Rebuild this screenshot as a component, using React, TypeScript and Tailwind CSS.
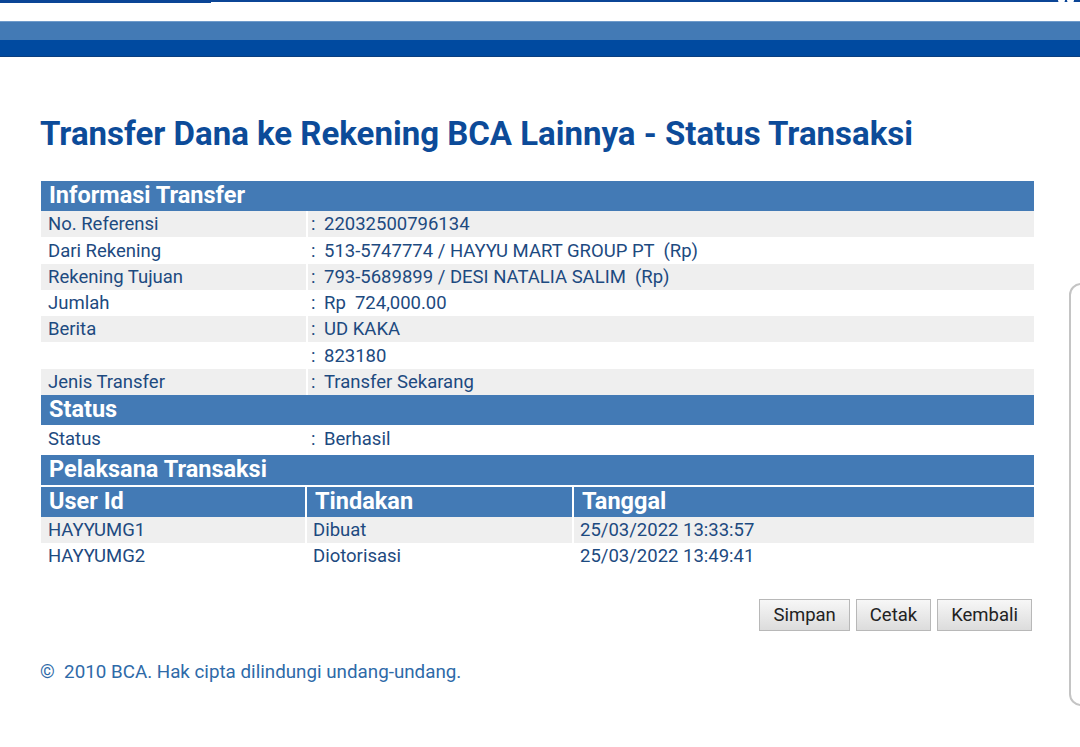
const info: [string, string][] = [
  ['No. Referensi', '22032500796134'],
  ['Dari Rekening', '513-5747774 / HAYYU MART GROUP PT  (Rp)'],
  ['Rekening Tujuan', '793-5689899 / DESI NATALIA SALIM  (Rp)'],
  ['Jumlah', 'Rp  724,000.00'],
  ['Berita', 'UD KAKA'],
  ['', '823180'],
  ['Jenis Transfer', 'Transfer Sekarang'],
];

const users: [string, string, string][] = [
  ['HAYYUMG1', 'Dibuat', '25/03/2022 13:33:57'],
  ['HAYYUMG2', 'Diotorisasi', '25/03/2022 13:49:41'],
];

function SectionHeader({ title }: { title: string }) {
  return (
    <div className="h-[30px] bg-[#437ab5] px-[8px] flex items-center text-white font-bold text-[23.5px] leading-none">
      {title}
    </div>
  );
}

function InfoRow({ label, value, grey }: { label: string; value: string; grey: boolean }) {
  const bg = grey ? 'bg-[#efefef]' : 'bg-white';
  return (
    <div className="flex h-[26.3px] gap-[2px] text-[18.5px] text-[#1d4a80]">
      <div className={`w-[265px] ${bg} px-[7px] pt-[2px] flex items-center`}>{label}</div>
      <div className={`flex-1 ${bg} pl-[3px] pt-[2px] flex items-center whitespace-pre`}>
        <span className="w-[13px]">:</span>
        <span>{value}</span>
      </div>
    </div>
  );
}

function Btn({ label }: { label: string }) {
  return (
    <button className="h-[32px] px-[13px] border border-[#b8b8b8] bg-gradient-to-b from-[#f7f7f7] to-[#dcdcdc] text-[18.5px] text-[#222] leading-none">
      {label}
    </button>
  );
}

export default function App() {
  return (
    <div className="relative w-[1080px] h-[747px] overflow-hidden bg-white" style={{ fontFamily: 'Roboto, "Liberation Sans", sans-serif' }}>
      {/* top bars */}
      <div className="flex h-[3px]">
        <div className="w-[211px] bg-[#0b4596]" />
        <div className="flex-1 flex flex-col">
          <div className="h-[2px] bg-[#0b4596]" />
        </div>
      </div>
      <div className="h-[18px]" />
      <div className="h-[19px] bg-[#437ab5] border-t border-[#6f9bcb]" />
      <div className="h-[17px] bg-[#004aa0] border-b border-[#0b3f80]" />

      <h1 className="mt-[60px] ml-[40px] text-[33px] font-bold text-[#0c4b99] leading-none">
        Transfer Dana ke Rekening BCA Lainnya - Status Transaksi
      </h1>

      <div className="mt-[31px] ml-[41px] w-[993px] flex flex-col">
        <SectionHeader title="Informasi Transfer" />
        {info.map(([l, v], i) => (
          <InfoRow key={i} label={l} value={v} grey={i % 2 === 0} />
        ))}
        <SectionHeader title="Status" />
        <div className="flex h-[27px] gap-[2px] text-[18.5px] text-[#1d4a80]">
          <div className="w-[265px] px-[7px] pt-[2px] flex items-center">Status</div>
          <div className="flex-1 pl-[3px] pt-[2px] flex items-center whitespace-pre">
            <span className="w-[13px]">:</span>
            <span>Berhasil</span>
          </div>
        </div>
        <div className="mt-[3px]">
          <SectionHeader title="Pelaksana Transaksi" />
        </div>
        <div className="mt-[2px] flex h-[30px] gap-[2px] text-white font-bold text-[23.5px]">
          <div className="w-[264px] bg-[#437ab5] px-[8px] flex items-center">User Id</div>
          <div className="w-[265px] bg-[#437ab5] px-[8px] flex items-center">Tindakan</div>
          <div className="flex-1 bg-[#437ab5] px-[8px] flex items-center">Tanggal</div>
        </div>
        {users.map(([u, t, d], i) => {
          const bg = i % 2 === 0 ? 'bg-[#efefef]' : 'bg-white';
          return (
            <div key={u} className="flex h-[26px] gap-[2px] text-[18.5px] text-[#1d4a80]">
              <div className={`w-[264px] ${bg} px-[7px] pt-[2px] flex items-center`}>{u}</div>
              <div className={`w-[265px] ${bg} px-[6px] pt-[2px] flex items-center`}>{t}</div>
              <div className={`flex-1 ${bg} px-[6px] pt-[2px] flex items-center`}>{d}</div>
            </div>
          );
        })}

        <div className="mt-[30px] flex justify-end gap-[6px] pr-[2px]">
          <Btn label="Simpan" />
          <Btn label="Cetak" />
          <Btn label="Kembali" />
        </div>
      </div>

      <div className="mt-[27px] ml-[40px] text-[18.8px] text-[#2e6aa8] whitespace-pre">©  2010 BCA. Hak cipta dilindungi undang-undang.</div>

      {/* overlay edge on the right */}
      <div className="absolute left-[1069px] top-[283px] w-[40px] h-[423px] rounded-[12px] border-2 border-[#c4c4c4]" />
      <div className="absolute right-[6px] top-0 flex gap-[2px]">
        <div className="w-[7px] h-[3px] rounded-b-full bg-white" />
        <div className="w-[7px] h-[3px] rounded-b-full bg-white" />
      </div>
    </div>
  );
}
